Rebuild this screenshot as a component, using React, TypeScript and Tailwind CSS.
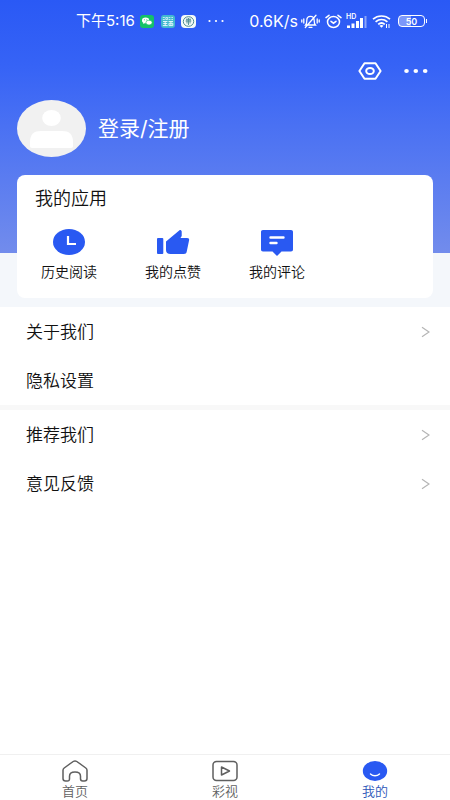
import React, { useState } from 'react';

type Tab = 'home' | 'video' | 'mine';

function StatusBar() {
  return (
    <div className="flex h-[42px] items-center justify-between pl-[76px] pr-[23px] font-normal text-white">
      <div className="flex items-center">
        <span className="text-[15px] leading-5">下午5:16</span>
        {/* notification badges */}
        <svg className="ml-[5px] shrink-0" width="14" height="13" viewBox="0 0 14 13">
          <rect width="14" height="13" rx="3" fill="#14c167" />
          <ellipse cx="5.6" cy="5.4" rx="3.6" ry="2.8" fill="#fff" />
          <ellipse cx="9" cy="7.6" rx="3.1" ry="2.4" fill="#fff" stroke="#14c167" strokeWidth="0.6" />
          <circle cx="4.4" cy="4.8" r="0.5" fill="#14c167" />
          <circle cx="6.8" cy="4.8" r="0.5" fill="#14c167" />
          <path d="M3.4 7.4l-.5 1.6 1.8-1z" fill="#fff" />
        </svg>
        <span className="ml-[7px] flex h-[13px] w-[14px] shrink-0 flex-col items-center justify-center overflow-hidden rounded-[3px] bg-[#43b9cf]">
          <svg width="12" height="11" viewBox="0 0 12 11" fill="none" stroke="#dff6fa">
            <path d="M.8 1.5h2M.8 3.5h2M3.8 1.5h1.8v2H3.8zM6.6 1.5h1.8M6.6 3.5h1.8M9.4 1.5H11M9.4 3.5H11" strokeWidth="0.8" />
            <path d="M1 5.5h4.4M3.2 5v5M1.2 7.5h4M.8 9.6h4.8M6.6 5.5H11M7 7.3h3.8v2.3H7zM8.9 5v4.6" strokeWidth="1" />
          </svg>
        </span>
        <svg className="ml-[6px] shrink-0" width="15" height="13" viewBox="0 0 15 13">
          <rect width="15" height="13" rx="4" fill="#f3faf8" />
          <ellipse cx="7.5" cy="6.5" rx="5.2" ry="4.8" fill="none" stroke="#4d8b91" strokeWidth="1" />
          <path d="M5 4.2h5M4.6 6h5.8M6 4v4.5M9 4v4.5M7.5 3v7" stroke="#4d8b91" strokeWidth="0.9" />
        </svg>
        <svg className="ml-[12px] shrink-0" width="16" height="4" viewBox="0 0 16 4" fill="#fff">
          <circle cx="1.5" cy="2" r="1.1" />
          <circle cx="8" cy="2" r="1.1" />
          <circle cx="14.5" cy="2" r="1.1" />
        </svg>
      </div>
      <div className="flex items-center">
        <span className="text-[16px] leading-5">0.6K/s</span>
        {/* muted bell */}
        <svg className="ml-[3px] shrink-0" width="19" height="15" viewBox="0 0 19 15" fill="none" stroke="#fff" strokeLinecap="round" strokeWidth="1.3">
          <path d="M4.6 11h9.8c-1.2-1.3-1.2-2.4-1.2-4.6 0-2.4-1.5-4-3.7-4S5.8 4 5.8 6.4c0 2.2 0 3.3-1.2 4.6zM8 13.3h3M4.3 13.5L15 1.2M2.8 5v4M.8 6v2M16.2 5v4M18.2 6v2" />
        </svg>
        {/* alarm clock */}
        <svg className="ml-[5px] shrink-0" width="17" height="15" viewBox="0 0 17 15" fill="none" stroke="#fff" strokeLinecap="round" strokeWidth="1.5">
          <ellipse cx="8.5" cy="8" rx="6" ry="5.5" />
          <path d="M6 7.3l2.5 1.9L11 7.3M1 3.6l3-2.3M16 3.6l-3-2.3" />
        </svg>
        {/* mobile signal */}
        <span className="relative ml-1 h-[15px] w-[22px] shrink-0">
          <span className="absolute left-0 top-0 text-[7px] font-semibold leading-[6px]">HD</span>
          <svg width="22" height="15" viewBox="0 0 22 15" fill="none" stroke="#fff" strokeWidth="3">
            <path d="M2.5 11.5v2.500M7 9.500v4.500M11.500 7v7M15.500 4v10" />
            <path d="M19.500 2v12" strokeWidth="2" opacity="0.45" />
          </svg>
        </span>
        <svg className="ml-1 shrink-0" width="20" height="15" viewBox="0 0 20 15" fill="none" stroke="#fff" strokeWidth="1.7">
          <path d="M1 5.2c4.9-4.3 12.1-4.3 17 0M3.6 7.9c3.5-3 8.300-3 11.800 0M6.200 10.400c2-1.700 4.600-1.700 6.600 0" />
          <path d="M7.5 11.7l2 2 2-2c-1.200-.8-2.800-.8-4 0z" fill="#fff" stroke="none" />
          <path d="M14.5 10v4M17 10v4" strokeWidth="1" />
        </svg>
        <span className="ml-[6px] flex h-[12px] w-[27px] shrink-0 items-center justify-center rounded-[4px] border border-white bg-[linear-gradient(to_right,#7c98fa_50%,transparent_50%)] text-[9px] font-semibold leading-none">
          50
        </span>
        <span className="ml-px h-1 w-px bg-white" />
      </div>
    </div>
  );
}

function Toolbar() {
  return (
    <div className="flex h-[58px] items-center justify-end gap-[22px] pr-[22px]">
      <button type="button" aria-label="设置">
        <svg width="24" height="18" viewBox="0 0 24 18" fill="none" stroke="#fff" strokeWidth="2" strokeLinejoin="round">
          <path d="M6.5 1.2h11L22.6 9l-5.1 7.8h-11L1.4 9z" />
          <ellipse cx="12" cy="9" rx="3.8" ry="3" />
        </svg>
      </button>
      <button type="button" aria-label="更多">
        <svg width="24" height="18" viewBox="0 0 24 18" fill="#fff">
          <ellipse cx="2.5" cy="9" rx="2.3" ry="1.9" />
          <ellipse cx="11.8" cy="9" rx="2.3" ry="1.9" />
          <ellipse cx="21.2" cy="9" rx="2.3" ry="1.9" />
        </svg>
      </button>
    </div>
  );
}

function ClockIcon() {
  return (
    <svg width="34" height="28" viewBox="0 0 34 28">
      <ellipse cx="17" cy="14" rx="16" ry="13" fill="#2959f2" />
      <path d="M16 8v8h8" fill="none" stroke="#fff" strokeWidth="2.2" />
    </svg>
  );
}

function ThumbIcon() {
  return (
    <svg width="34" height="28" viewBox="0 0 34 28" fill="#2959f2">
      <rect x="1" y="10" width="6.3" height="16" rx="1" />
      <path d="M10 13.500L23.500 2.300c.7-.6 2.200.2 2.200 1.300v4.400L24.500 10H31c1.700 0 2.400.8 2.100 2.200l-2.400 11.600c-.3 1.500-1.200 2.200-2.800 2.200H14.500C11.500 26 10 24.600 10 22z" />
    </svg>
  );
}

function CommentIcon() {
  return (
    <svg width="34" height="28" viewBox="0 0 34 28">
      <path d="M3 2h28c1.300 0 2 .8 2 2v17.500c0 1.200-.7 2-2 2h-9.500L17 28l-4.500-4.500H3c-1.300 0-2-.8-2-2V4c0-1.200.7-2 2-2z" fill="#2959f2" />
      <path d="M10.5 9.5h13M10.5 15h6" stroke="#fff" strokeWidth="2.4" strokeLinecap="round" />
    </svg>
  );
}

const apps = [
  { label: '历史阅读', icon: <ClockIcon /> },
  { label: '我的点赞', icon: <ThumbIcon /> },
  { label: '我的评论', icon: <CommentIcon /> },
];

function MenuRow({ label, arrow = true }: { label: string; arrow?: boolean }) {
  return (
    <button type="button" className="flex h-[49px] w-full items-center justify-between pl-[26px] pr-5 text-left">
      <span className="text-[17px] leading-6">{label}</span>
      {arrow && (
        <svg width="9" height="12" viewBox="0 0 9 12" fill="none" stroke="#b5b5b5" strokeWidth="1.2">
          <path d="M1 1.2L8 6 1 10.8" />
        </svg>
      )}
    </button>
  );
}

const tabs: { id: Tab; label: string; icon: React.ReactNode }[] = [
  {
    id: 'home',
    label: '首页',
    icon: (
      <svg width="26" height="22" viewBox="0 0 26 22" fill="none" stroke="#5f5f5f" strokeWidth="1.5" strokeLinejoin="round">
        <path d="M1 10.3c0-1 .4-1.7 1.2-2.3l9-6.5c1.2-.8 2.4-.8 3.6 0l9 6.5c.8.6 1.2 1.3 1.2 2.3v8.2c0 1.7-.9 2.5-2.600 2.500h-1.700c-1.500 0-2.200-.8-2.200-2.200v-2.600c0-2.600-1.600-4.200-5.500-4.200s-5.500 1.600-5.500 4.200v2.600C7.500 20.200 6.800 21 5.300 21H3.600C1.900 21 1 20.200 1 18.500z" />
      </svg>
    ),
  },
  {
    id: 'video',
    label: '彩视',
    icon: (
      <svg width="26" height="22" viewBox="0 0 26 22" fill="none" stroke="#5f5f5f" strokeWidth="1.5" strokeLinejoin="round">
        <rect x="1" y="1.5" width="24" height="19" rx="3.5" />
        <path d="M9.5 7v8l8-4z" />
      </svg>
    ),
  },
  {
    id: 'mine',
    label: '我的',
    icon: (
      <svg width="26" height="22" viewBox="0 0 26 22">
        <ellipse cx="13" cy="11" rx="12.2" ry="10" fill="#2959f2" />
        <path d="M8.5 14c2.5 2.4 6.5 2.4 9 0" fill="none" stroke="#fff" strokeWidth="1.4" strokeLinecap="round" />
      </svg>
    ),
  },
];

export default function App() {
  const [activeTab, setActiveTab] = useState<Tab>('mine');

  return (
    <div className="flex min-h-screen flex-col bg-white font-['Inter','Noto_Sans_CJK_SC',sans-serif] font-[350] text-[#111111]">
      {/* blue backdrop ends partway down the apps card */}
      <header className="bg-[#f4f7fb] bg-[linear-gradient(to_bottom,#2a59f5,#3663f6_26%,#4a71f3_50%,#728cec)] bg-[length:100%_253px] bg-no-repeat pb-[9px]">
        <StatusBar />
        <Toolbar />
        <div className="flex h-[75px] items-start px-[17px]">
          <button type="button" className="flex items-center gap-3 text-[21px] font-normal leading-7 text-white">
            <svg width="69" height="57" viewBox="0 0 69 57">
              <ellipse cx="34.5" cy="28.5" rx="34.5" ry="28.5" fill="#f1f1f1" />
              <ellipse cx="34.5" cy="18" rx="9.3" ry="8" fill="#fff" />
              <path d="M13 42c0-8 4-11 11-11h21c7 0 11 3 11 11v4c0 1.3-.7 2-2 2H15c-1.3 0-2-.7-2-2z" fill="#fff" />
            </svg>
            登录/注册
          </button>
        </div>
        <section className="mx-[17px] h-[123px] rounded-lg bg-white pt-3">
          <h2 className="px-[18px] text-[18px] leading-6">我的应用</h2>
          <div className="mt-[17px] grid grid-cols-4">
            {apps.map((app) => (
              <button key={app.label} type="button" className="flex flex-col items-center gap-[6px] text-[14px] leading-5">
                {app.icon}
                {app.label}
              </button>
            ))}
          </div>
        </section>
      </header>

      <main className="flex-1">
        <MenuRow label="关于我们" />
        <MenuRow label="隐私设置" arrow={false} />
        <div className="h-[5px] bg-[#f8f8f8]" />
        <MenuRow label="推荐我们" />
        <MenuRow label="意见反馈" />
      </main>

      <nav className="grid h-[46px] grid-cols-3 border-t border-[#f0f0f0]">
        {tabs.map((tab) => (
          <button
            key={tab.id}
            type="button"
            onClick={() => setActiveTab(tab.id)}
            className={`flex flex-col items-center pt-[5px] text-[13px] leading-[18px] ${
              activeTab === tab.id ? 'text-[#2c55b8]' : 'text-[#5f5f5f]'
            }`}
          >
            {tab.icon}
            {tab.label}
          </button>
        ))}
      </nav>
    </div>
  );
}
